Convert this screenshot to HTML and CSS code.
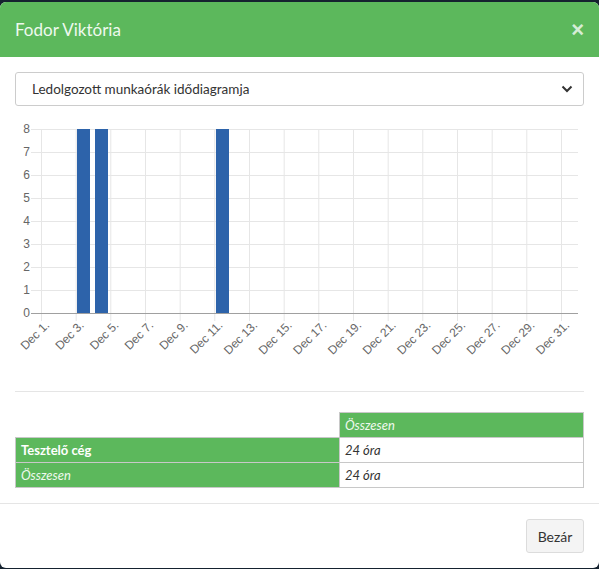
FILE: index.html
```html
<!DOCTYPE html>
<html lang="hu">
<head>
<meta charset="utf-8">
<title>Fodor Viktória</title>
<link rel="stylesheet" href="styles.css">
</head>
<body>
<div class="modal">
  <div class="modal-header">
    <h4 class="modal-title">Fodor Viktória</h4>
    <span class="close">×</span>
  </div>
  <div class="modal-body">
    <div class="select">
      <span>Ledolgozott munkaórák idődiagramja</span>
      <svg class="chev" width="12" height="8" viewBox="0 0 12 8"><path d="M1.5 1.5 L6 6 L10.5 1.5" fill="none" stroke="#333" stroke-width="2"/></svg>
    </div>
    <svg class="chart" width="569" height="258" viewBox="15 112 569 258">
      <g stroke="#e6e6e6" stroke-width="1">
        <line x1="31" y1="128.5" x2="578" y2="128.5"/>
        <line x1="31" y1="151.5" x2="578" y2="151.5"/>
        <line x1="31" y1="174.5" x2="578" y2="174.5"/>
        <line x1="31" y1="197.5" x2="578" y2="197.5"/>
        <line x1="31" y1="220.5" x2="578" y2="220.5"/>
        <line x1="31" y1="243.5" x2="578" y2="243.5"/>
        <line x1="31" y1="266.5" x2="578" y2="266.5"/>
        <line x1="31" y1="289.5" x2="578" y2="289.5"/>
      </g>
      <g stroke="#e6e6e6" stroke-width="1">
        <line x1="41.5" y1="128" x2="41.5" y2="320"/>
        <line x1="76.2" y1="128" x2="76.2" y2="320"/>
        <line x1="110.8" y1="128" x2="110.8" y2="320"/>
        <line x1="145.5" y1="128" x2="145.5" y2="320"/>
        <line x1="180.2" y1="128" x2="180.2" y2="320"/>
        <line x1="214.8" y1="128" x2="214.8" y2="320"/>
        <line x1="249.5" y1="128" x2="249.5" y2="320"/>
        <line x1="284.2" y1="128" x2="284.2" y2="320"/>
        <line x1="318.8" y1="128" x2="318.8" y2="320"/>
        <line x1="353.5" y1="128" x2="353.5" y2="320"/>
        <line x1="388.2" y1="128" x2="388.2" y2="320"/>
        <line x1="422.8" y1="128" x2="422.8" y2="320"/>
        <line x1="457.5" y1="128" x2="457.5" y2="320"/>
        <line x1="492.2" y1="128" x2="492.2" y2="320"/>
        <line x1="526.8" y1="128" x2="526.8" y2="320"/>
        <line x1="561.5" y1="128" x2="561.5" y2="320"/>
      </g>
      <line x1="31" y1="312.5" x2="578" y2="312.5" stroke="#a0a0a0" stroke-width="1"/>
      <g fill="#2d63aa">
        <rect x="77" y="128" width="13" height="184"/>
        <rect x="95" y="128" width="13" height="184"/>
        <rect x="216" y="128" width="13" height="184"/>
      </g>
      <g class="ylab" text-anchor="end">
        <text x="30" y="131.5">8</text>
        <text x="30" y="154.5">7</text>
        <text x="30" y="177.5">6</text>
        <text x="30" y="200.5">5</text>
        <text x="30" y="223.5">4</text>
        <text x="30" y="246.5">3</text>
        <text x="30" y="269.5">2</text>
        <text x="30" y="292.5">1</text>
        <text x="30" y="315.5">0</text>
      </g>
      <g class="xlab" text-anchor="end">
        <text transform="translate(50 325) rotate(-45)">Dec 1.</text>
        <text transform="translate(84.7 325) rotate(-45)">Dec 3.</text>
        <text transform="translate(119.3 325) rotate(-45)">Dec 5.</text>
        <text transform="translate(154 325) rotate(-45)">Dec 7.</text>
        <text transform="translate(188.7 325) rotate(-45)">Dec 9.</text>
        <text transform="translate(223.3 325) rotate(-45)">Dec 11.</text>
        <text transform="translate(258 325) rotate(-45)">Dec 13.</text>
        <text transform="translate(292.7 325) rotate(-45)">Dec 15.</text>
        <text transform="translate(327.3 325) rotate(-45)">Dec 17.</text>
        <text transform="translate(362 325) rotate(-45)">Dec 19.</text>
        <text transform="translate(396.7 325) rotate(-45)">Dec 21.</text>
        <text transform="translate(431.3 325) rotate(-45)">Dec 23.</text>
        <text transform="translate(466 325) rotate(-45)">Dec 25.</text>
        <text transform="translate(500.7 325) rotate(-45)">Dec 27.</text>
        <text transform="translate(535.3 325) rotate(-45)">Dec 29.</text>
        <text transform="translate(570 325) rotate(-45)">Dec 31.</text>
      </g>
    </svg>
    <hr class="sep">
    <table class="summary">
      <tr>
        <th class="blank"></th>
        <th class="head">Összesen</th>
      </tr>
      <tr>
        <td class="name bold">Tesztelő cég</td>
        <td class="val">24 óra</td>
      </tr>
      <tr>
        <td class="name ital">Összesen</td>
        <td class="val">24 óra</td>
      </tr>
    </table>
  </div>
  <div class="modal-footer">
    <button class="btn">Bezár</button>
  </div>
</div>
</body>
</html>
```
FILE: styles.css
```css
html, body {
  margin: 0;
  padding: 0;
}
body {
  background: #15222f;
  width: 599px;
  height: 569px;
  overflow: hidden;
  font-family: Lato, "Liberation Sans", sans-serif;
  color: #333;
}
.modal {
  margin-top: 2px;
  height: 566px;
  background: #fff;
  border-radius: 6px;
  overflow: hidden;
  display: flex;
  flex-direction: column;
}
.modal-header {
  background: #5cb85c;
  height: 56px;
  box-sizing: border-box;
  padding: 0 15px;
  display: flex;
  align-items: center;
  justify-content: space-between;
}
.modal-title {
  margin: 0;
  font-size: 17px;
  font-weight: 400;
  color: #eef9ee;
}
.close {
  font-family: "Liberation Sans", sans-serif;
  font-weight: 700;
  font-size: 22px;
  color: #fff;
  opacity: 0.75;
  line-height: 1;
}
.modal-body {
  padding: 15px 15px;
  display: flex;
  flex-direction: column;
}
.select {
  height: 34px;
  box-sizing: border-box;
  border: 1px solid #ccc;
  border-radius: 3px;
  display: flex;
  align-items: center;
  justify-content: space-between;
  padding: 0 10px 0 16px;
  font-size: 13.5px;
  color: #333;
}
.chev {
  display: block;
}
.chart {
  display: block;
  margin-top: 7px;
}
.ylab, .xlab {
  font-family: "Liberation Sans", Arial, sans-serif;
  font-size: 12px;
  fill: #666;
}
.sep {
  margin: 20px 0 20px;
  border: 0;
  border-top: 1px solid #e5e5e5;
  height: 0;
}
.summary {
  border-collapse: collapse;
  width: 569px;
  font-size: 13px;
}
.summary th, .summary td {
  height: 25px;
  box-sizing: border-box;
  padding: 0 5px;
  text-align: left;
  font-weight: 400;
}
.summary .blank {
  width: 324px;
  padding: 0;
}
.summary .head {
  background: #5cb85c;
  border: 1px solid #c8c8c8;
  color: #eef9ee;
  font-style: italic;
}
.summary .name {
  background: #5cb85c;
  border: 1px solid #c8c8c8;
  color: #fff;
}
.summary .bold {
  font-weight: 700;
}
.summary .ital {
  font-style: italic;
  color: #eef9ee;
}
.summary .val {
  border: 1px solid #c8c8c8;
  font-style: italic;
  color: #333;
}
.modal-footer {
  border-top: 1px solid #e5e5e5;
  padding: 15px;
  display: flex;
  justify-content: flex-end;
}
.btn {
  height: 34px;
  width: 58px;
  box-sizing: border-box;
  background: #f4f4f4;
  border: 1px solid #dcdcdc;
  border-radius: 3px;
  font-family: Lato, "Liberation Sans", sans-serif;
  font-size: 14px;
  color: #333;
  padding: 0;
}
```
